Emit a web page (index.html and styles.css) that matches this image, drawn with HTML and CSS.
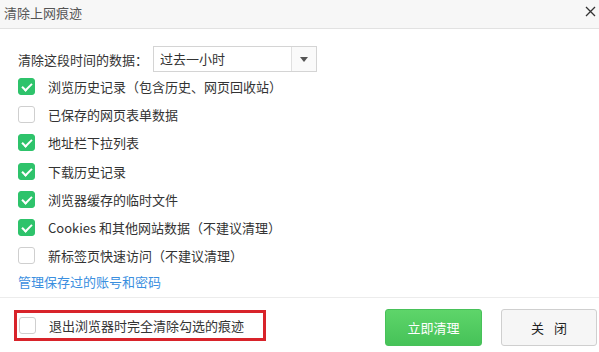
FILE: index.html
```html
<!DOCTYPE html>
<html lang="zh-CN">
<head>
<meta charset="utf-8">
<title>清除上网痕迹</title>
<link rel="stylesheet" href="styles.css">
</head>
<body>
<div class="dialog">
  <div class="titlebar">
    <span class="title">清除上网痕迹</span>
    <svg class="close-x" width="11" height="11" viewBox="0 0 11 11"><path d="M1 1L10 10M10 1L1 10" stroke="#333" stroke-width="1.3" fill="none"/></svg>
  </div>
  <div class="content">
    <div class="range">
      <span class="range-label">清除这段时间的数据：</span>
      <div class="select">
        <span class="select-text">过去一小时</span>
        <span class="select-arrow"><svg width="8" height="5" viewBox="0 0 8 5"><path d="M0 0H8L4 5Z" fill="#555"/></svg></span>
      </div>
    </div>
    <ul class="items">
      <li class="item"><span class="cb on"></span><span>浏览历史记录（包含历史、网页回收站）</span></li>
      <li class="item"><span class="cb"></span><span>已保存的网页表单数据</span></li>
      <li class="item"><span class="cb on"></span><span>地址栏下拉列表</span></li>
      <li class="item"><span class="cb on"></span><span>下载历史记录</span></li>
      <li class="item"><span class="cb on"></span><span>浏览器缓存的临时文件</span></li>
      <li class="item"><span class="cb on"></span><span>Cookies 和其他网站数据（不建议清理）</span></li>
      <li class="item"><span class="cb"></span><span>新标签页快速访问（不建议清理）</span></li>
    </ul>
    <a class="link">管理保存过的账号和密码</a>
  </div>
  <div class="footer">
    <div class="exit-opt"><span class="cb"></span><span>退出浏览器时完全清除勾选的痕迹</span></div>
    <div class="buttons">
      <button class="btn primary">立即清理</button>
      <button class="btn plain">关 闭</button>
    </div>
  </div>
</div>
</body>
</html>
```
FILE: styles.css
```css
* { box-sizing: border-box; }
html, body { margin: 0; padding: 0; background: #fff; }
body {
  font-family: "Noto Sans CJK SC", "Microsoft YaHei", sans-serif;
  font-size: 13px;
  color: #333;
}
.dialog { width: 599px; height: 352px; display: flex; flex-direction: column; overflow: hidden; }
.titlebar {
  height: 29px;
  background: #f7f7f7;
  border-bottom: 1px solid #e2e2e2;
  display: flex;
  align-items: center;
  justify-content: space-between;
  padding: 0 3px 0 4px;
}
.title { font-size: 13px; color: #555; line-height: 1; margin-top: -3px; }
.close-x { margin-top: -5px; }
.content { height: 269px; padding: 17px 18px 0 18px; border-bottom: 1px solid #ececec; }
.range { display: flex; align-items: center; height: 26px; }
.range-label { width: 135px; }
.select {
  width: 164px; height: 26px;
  border: 1px solid #d4d4d4;
  display: flex;
  background: #fff;
}
.select-text { flex: 1; padding-left: 6px; line-height: 24px; border-right: 1px solid #e0e0e0; }
.select-arrow { width: 24px; display: flex; align-items: center; justify-content: center; background: #fafafa; }
.items { list-style: none; margin: 0; padding: 0; }
.item { height: 28.3px; display: flex; align-items: center; }
.cb {
  width: 17px; height: 17px;
  border: 1px solid #cfcfcf;
  border-radius: 3px;
  margin-right: 13px;
  background: #fff;
  flex: none;
  position: relative;
}
.cb.on { background: #2ec36b; border-color: #2ec36b; }
.cb.on::after {
  content: "";
  position: absolute;
  left: 5px; top: 2px;
  width: 4px; height: 8px;
  border: solid #fff;
  border-width: 0 2px 2px 0;
  transform: rotate(45deg);
}
.link { display: block; height: 24px; line-height: 24px; color: #3b8fdf; }
.footer { flex: 1; display: flex; justify-content: space-between; padding: 0 2px 0 14px; }
.exit-opt {
  margin-top: 12px;
  width: 252px; height: 31px;
  border: 3px solid #d8232a;
  display: flex; align-items: center;
  padding-left: 2px;
}
.buttons { display: flex; gap: 19px; margin-top: 11px; }
.btn {
  font-family: inherit;
  font-size: 13px;
  height: 37px;
  border-radius: 3px;
  cursor: pointer;
}
.primary {
  width: 97px;
  background: linear-gradient(#5ed56a, #46c258);
  border: 1px solid #47c159;
  color: #fff;
}
.plain {
  width: 96px;
  background: #f6f6f6;
  border: 1px solid #cfcfcf;
  color: #222;
  word-spacing: 7px;
}
```
